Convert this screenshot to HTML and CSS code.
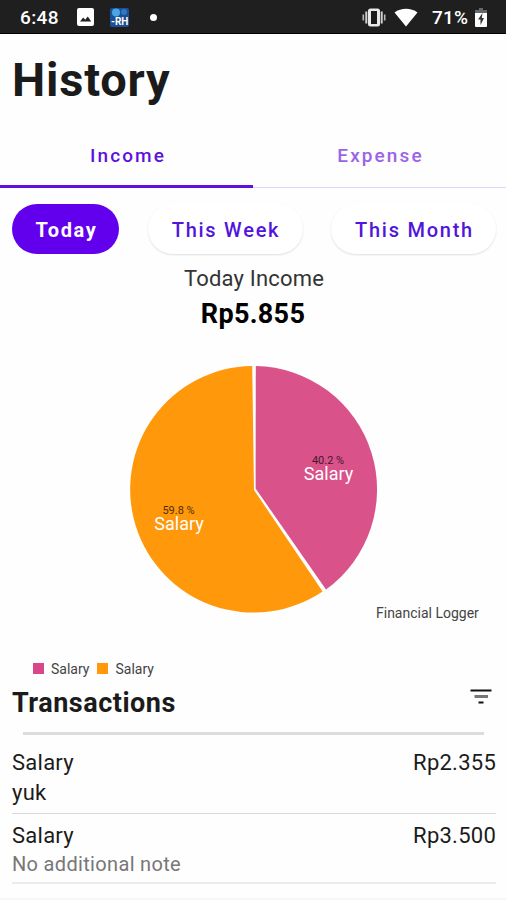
FILE: index.html
```html
<!DOCTYPE html>
<html lang="en">
	<head>
		<meta charset="UTF-8" />
		<meta name="viewport" content="width=device-width, initial-scale=1.0" />
		<title>History</title>
		<link rel="stylesheet" href="styles.css">
	</head>

	<body>
		<div class="status">
			<span class="time">6:48</span>
			<svg class="ico-img" width="17" height="18" viewBox="0 0 17 18">
				<rect x="0" y="0" width="17" height="18" rx="2" fill="#fff" />
				<path d="M3 13.5l3.2-4 2 2.3 2.6-3.3 3.4 5z" fill="#1f1f1f" />
			</svg>
			<svg class="ico-app" width="19" height="19" viewBox="0 0 19 19">
				<rect width="19" height="19" rx="2" fill="#1d4f92" />
				<circle cx="6" cy="4.5" r="4" fill="#49a5e6" />
				<circle cx="14" cy="4" r="3" fill="#2c78c4" />
				<text x="1" y="16.5" class="app-txt">-RH</text>
			</svg>
			<span class="dot"></span>
			<svg class="ico-vib" width="24" height="19" viewBox="0 0 24 19">
				<rect x="6" y="0.5" width="12" height="18" rx="2.5" fill="#e8e8e8" />
				<rect x="9" y="3" width="6" height="13" fill="#1a1a1a" />
				<path d="M4.3 3.5v12M19.7 3.5v12" stroke="#d0d0d0" stroke-width="2" />
				<path d="M1.3 6.5v6M22.7 6.5v6" stroke="#b8b8b8" stroke-width="1.6" />
			</svg>
			<svg class="ico-wifi" width="24" height="19" viewBox="0 0 24 19">
				<path d="M12 18.5L.5 4.5C7-.5 17-.5 23.5 4.5z" fill="#fff" />
			</svg>
			<span class="percent">71%</span>
			<svg class="ico-bat" width="12" height="19" viewBox="0 0 12 19">
				<path d="M4 0h4v2h4v4H0V2h4z" fill="#666" />
				<path d="M0 5h12v13a1 1 0 0 1-1 1H1a1 1 0 0 1-1-1z" fill="#fff" />
				<path d="M7.5 5L3 11.5h2.5V17L9 10H6.800z" fill="#333" />
			</svg>
		</div>

		<h1 class="title">History</h1>

		<div class="tabs">
			<div class="tab active">Income</div>
			<div class="tab">Expense</div>
		</div>

		<div class="filters">
			<button class="btn today">Today</button>
			<button class="btn week">This Week</button>
			<button class="btn month">This Month</button>
		</div>

		<div class="summary">
			<div class="label">Today Income</div>
			<div class="total">Rp5.855</div>
		</div>

		<svg class="chart" width="506" height="350" viewBox="0 330 506 350">
			<path d="M255.800 366A123.500 123.500 0 0 1 326 589.500L255.600 488.500z" fill="#d9528a" />
			<path d="M252.200 366A123.300 123.300 0 1 0 322.600 591.400L254 490z" fill="#ff980a" />
			<text x="328" y="464" class="pct">40.2 %</text>
			<text x="328.500" y="480" class="name">Salary</text>
			<text x="178.500" y="514" class="pct">59.8 %</text>
			<text x="179" y="530" class="name">Salary</text>
			<text x="376" y="617.500" class="desc">Financial Logger</text>
			<rect x="33" y="663" width="11" height="11" fill="#d9468a" />
			<text x="51" y="674" class="legend">Salary</text>
			<rect x="97" y="663" width="11" height="11" fill="#ff980a" />
			<text x="115.500" y="674" class="legend">Salary</text>
		</svg>

		<div class="head">
			<h2>Transactions</h2>
			<svg class="ico-filter" width="22" height="16" viewBox="0 0 22 16">
				<path d="M0.500 1.500h21" stroke="#111" stroke-width="2" />
				<path d="M4.500 7.500h13.500" stroke="#777" stroke-width="3" />
				<path d="M8.500 13.500h5" stroke="#111" stroke-width="2" />
			</svg>
		</div>
		<div class="line"></div>

		<div class="list">
			<div class="item">
				<div class="row"><span>Salary</span><span>Rp2.355</span></div>
				<div class="note">yuk</div>
			</div>
			<div class="item last">
				<div class="row"><span>Salary</span><span>Rp3.500</span></div>
				<div class="note empty">No additional note</div>
			</div>
		</div>
		<div class="bottom"></div>
	</body>
</html>
```
FILE: styles.css
```css
* {
	box-sizing: border-box;
	margin: 0;
	padding: 0;
}

body {
	width: 506px;
	height: 900px;
	overflow: hidden;
	background: #fefefe;
	color: #1b1b1b;
	font-family: Roboto, "Liberation Sans", sans-serif;
}

.status {
	height: 34px;
	display: flex;
	align-items: center;
	padding: 1px 19px 0 20px;
	background: #1f1f1f;
	border-bottom: 1px solid #000;
	color: #fff;
	font-size: 19px;
	font-weight: 500;
}

.time {
	width: 57px;
	padding-top: 1px;
	letter-spacing: 0.4px;
}

.ico-app {
	margin-left: 16px;
}

.app-txt {
	font-size: 10px;
	font-weight: 700;
	fill: #fff;
}

.dot {
	width: 7px;
	height: 7px;
	margin-left: 21px;
	border-radius: 50%;
	background: #fff;
}

.ico-vib {
	margin-left: auto;
}

.ico-wifi {
	margin-left: 8px;
}

.percent {
	width: 37px;
	padding-top: 1px;
	margin-left: 14px;
	margin-right: 6px;
	letter-spacing: 0.2px;
}

.title {
	height: 89px;
	padding-left: 12px;
	font-size: 47px;
	line-height: 91px;
	font-weight: 700;
	letter-spacing: 0.8px;
}

.tabs {
	height: 65px;
	display: flex;
}

.tab {
	width: 50%;
	padding-left: 2px;
	border-bottom: 1px solid #dcd8fb;
	font-size: 19px;
	line-height: 65px;
	font-weight: 500;
	letter-spacing: 2.1px;
	text-align: center;
	color: #9a63e8;
}

.tab.active {
	padding-left: 3px;
	border-bottom: 3px solid #5c12dc;
	color: #5c12dc;
}

.filters {
	height: 66px;
	display: flex;
	align-items: flex-start;
	justify-content: space-between;
	padding: 16px 10px 0 12px;
}

.btn {
	height: 50px;
	padding: 2px 0 0 2px;
	border: none;
	border-radius: 25px;
	background: #fff;
	box-shadow: 0 1px 2px 0 #dedede;
	font-family: inherit;
	font-size: 20px;
	font-weight: 500;
	letter-spacing: 1.75px;
	color: #5115dc;
	white-space: nowrap;
}

.today {
	width: 107px;
	background: #6200ee;
	font-weight: 700;
	letter-spacing: 1.6px;
	color: #fff;
	box-shadow: none;
}

.week {
	width: 155px;
}

.month {
	width: 165px;
}

.summary {
	height: 76px;
	padding-top: 11px;
	text-align: center;
}

.label {
	padding-left: 2px;
	font-size: 22px;
	line-height: 28px;
	letter-spacing: 0.2px;
	color: #333;
}

.total {
	padding-top: 4px;
	font-size: 27px;
	line-height: 34px;
	font-weight: 700;
	letter-spacing: 0.3px;
	color: #000;
}

.chart {
	display: block;
}

.pct,
.name {
	text-anchor: middle;
}

.pct {
	font-size: 11px;
	fill: #000;
	opacity: 0.7;
}

.name {
	font-size: 18px;
	fill: #fff;
}

.desc,
.legend {
	font-size: 14px;
	fill: #444;
}

.head {
	height: 52px;
	display: flex;
	justify-content: space-between;
	padding: 6px 14px 0 12px;
}

.head h2 {
	font-size: 27px;
	line-height: 35px;
	font-weight: 700;
	letter-spacing: 0.5px;
}

.ico-filter {
	margin-top: 3px;
}

.line {
	height: 3px;
	margin: 0 22px 0 23px;
	background: #dcdcdc;
}

.list {
	padding: 0 10px 0 12px;
}

.item {
	height: 79px;
	padding-top: 14px;
	border-bottom: 1px solid #d8d8d8;
	font-size: 22px;
	letter-spacing: 0.25px;
}

.item.last {
	height: 70px;
	padding-top: 8px;
	border-bottom: 2px solid #ececec;
}

.row {
	display: flex;
	justify-content: space-between;
	line-height: 28px;
}

.note {
	line-height: 32px;
}

.note.empty {
	font-size: 20px;
	line-height: 28px;
	letter-spacing: 0.33px;
	color: #777;
}

.bottom {
	height: 2px;
	margin-top: 14px;
	background: #f6f6f6;
}
```
